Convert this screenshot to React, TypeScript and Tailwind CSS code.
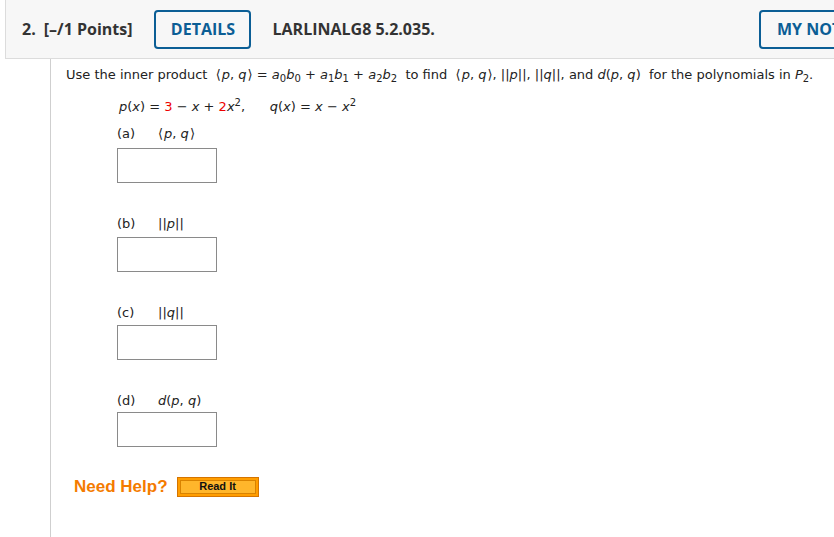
import React from "react";

const I = ({ children }: { children: React.ReactNode }) => <i className="italic">{children}</i>;
const Sub = ({ children }: { children: React.ReactNode }) => (
  <sub className="text-[10px]">{children}</sub>
);
const Sup = ({ children }: { children: React.ReactNode }) => (
  <sup className="text-[10px]">{children}</sup>
);
const L = () => <span className="mr-[1px]">⟨</span>;
const R = () => <span className="ml-[1px]">⟩</span>;

const Box = () => <div className="w-[100px] h-[35px] border border-[#8a8a8a] bg-white" />;

export default function App() {
  return (
    <div className="w-[834px] h-[537px] bg-white overflow-hidden relative">
      <div className="ml-[5px] h-[59px] bg-[#f7f7f7] border-l border-b border-[#dcdcdc] flex items-center pl-[16px] font-['Open_Sans',sans-serif] text-[16px] font-bold text-[#333] whitespace-nowrap">
        <span>2.</span>
        <span className="ml-[8px]">[–/1 Points]</span>
        <div className="ml-[22px] w-[97px] h-[39px] border-2 border-[#0b5e95] rounded-[4px] flex items-center justify-center text-[#0b5e95]">
          DETAILS
        </div>
        <span className="ml-[21px]">LARLINALG8 5.2.035.</span>
        <div className="ml-auto -mr-[40px] w-[115px] h-[39px] border-2 border-[#0b5e95] rounded-[4px] flex items-center pl-[16px] text-[#0b5e95]">
          MY NOTES
        </div>
      </div>
      <div className="ml-[50px] h-[478px] border-l border-[#cfcfcf] font-['DejaVu_Sans',Verdana,sans-serif] text-[13px] text-[#222]">
        <div className="pl-[15px] pt-[7px] whitespace-nowrap leading-[18px]">
          Use the inner product&nbsp; <L /><I>p</I>, <I>q</I><R /> = <I>a</I>
          <Sub>0</Sub>
          <I>b</I>
          <Sub>0</Sub> + <I>a</I>
          <Sub>1</Sub>
          <I>b</I>
          <Sub>1</Sub> + <I>a</I>
          <Sub>2</Sub>
          <I>b</I>
          <Sub>2</Sub>&nbsp; to find&nbsp; <L /><I>p</I>, <I>q</I><R />, ||<I>p</I>||, ||<I>q</I>||, and <I>d</I>(<I>p</I>, <I>q</I>)&nbsp; for the polynomials in <I>P</I>
          <Sub>2</Sub>.
        </div>
        <div className="pl-[68px] pt-[14px] whitespace-nowrap leading-[18px]">
          <I>p</I>(<I>x</I>) = <span className="text-[#ee0000]">3</span> − <I>x</I> + <span className="text-[#ee0000]">2</span>
          <I>x</I>
          <Sup>2</Sup>,&nbsp;&nbsp;&nbsp;&nbsp; <span className="ml-[4px]"><I>q</I>(<I>x</I>) = <I>x</I> − <I>x</I></span>
          <Sup>2</Sup>
        </div>
        <div className="pl-[66px] pt-[9px]">
          <div className="flex flex-col">
            <div className="leading-[18px] whitespace-nowrap flex">
              <span className="w-[41px]">(a)</span>
              <span><L /><I>p</I>, <I>q</I><R /></span>
            </div>
            <div className="mt-[5px]">
              <Box />
            </div>
            <div className="mt-[32px] leading-[18px] whitespace-nowrap flex">
              <span className="w-[41px]">(b)</span>
              <span>||<I>p</I>||</span>
            </div>
            <div className="mt-[4px]">
              <Box />
            </div>
            <div className="mt-[32px] leading-[18px] whitespace-nowrap flex">
              <span className="w-[41px]">(c)</span>
              <span>||<I>q</I>||</span>
            </div>
            <div className="mt-[3px]">
              <Box />
            </div>
            <div className="mt-[32px] leading-[18px] whitespace-nowrap flex">
              <span className="w-[41px]">(d)</span>
              <span><I>d</I>(<I>p</I>, <I>q</I>)</span>
            </div>
            <div className="mt-[2px]">
              <Box />
            </div>
          </div>
        </div>
        <div className="pl-[23px] pt-[27px] flex items-center font-['Liberation_Sans',Arial,sans-serif]">
          <span className="text-[17px] font-bold text-[#f47b00]">Need Help?</span>
          <div className="ml-[9px] w-[82px] h-[20px] border border-[#d57400] bg-[#ff9d00] p-[2px]">
            <div className="w-full h-full border border-[#d98200] bg-[#ffb62b] flex items-center justify-center text-[11px] font-bold text-[#111] leading-none">
              Read It
            </div>
          </div>
        </div>
      </div>
    </div>
  );
}
